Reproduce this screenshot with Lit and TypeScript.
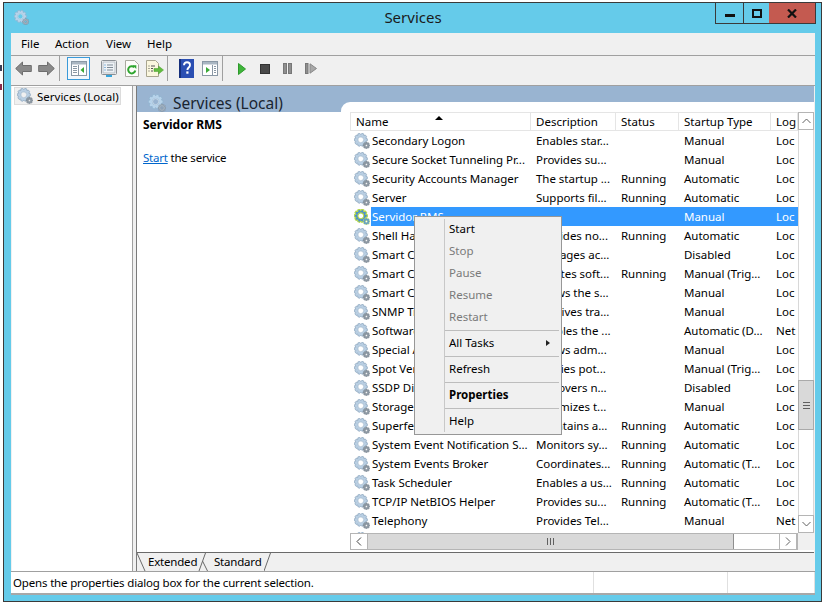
import { LitElement, html, css, svg } from "lit";
import { customElement } from "lit/decorators.js";

function gearPath(cx: number, cy: number, ro: number, ri: number, teeth: number, hole: number) {
  let d = "";
  const step = (Math.PI * 2) / teeth;
  for (let i = 0; i < teeth; i++) {
    const a = i * step;
    const pts: [number, number][] = [
      [ri, a - step * 0.5],
      [ro, a - step * 0.24],
      [ro, a + step * 0.24],
    ];
    for (const [r, t] of pts) {
      d += `${d ? "L" : "M"}${(cx + r * Math.cos(t)).toFixed(2)} ${(cy + r * Math.sin(t)).toFixed(2)}`;
    }
  }
  d += "Z";
  d += `M${cx + hole} ${cy}A${hole} ${hole} 0 1 0 ${cx - hole} ${cy}A${hole} ${hole} 0 1 0 ${cx + hole} ${cy}Z`;
  return d;
}

const BIG = gearPath(6.8, 6.8, 6.6, 5.2, 10, 2.9);
const SMALL = gearPath(12.4, 12.4, 3.5, 2.6, 8, 1);

function gear(size = 16, selected = false, faint = false) {
  return svg`<svg class="gear" width=${size} height=${size} viewBox="0 0 16 16">
    ${selected
      ? svg`<path d=${BIG} fill="#4a8fd0" stroke="#b5d84a" stroke-width="1.1" fill-rule="evenodd"/>
            <path d=${SMALL} fill="#5a9ad0" stroke="#c3dc5c" stroke-width=".5" fill-rule="evenodd"/>`
      : svg`<path d=${BIG} fill=${faint ? "#b7d3ea" : "#b9cfe3"} stroke=${faint ? "#90b4d0" : "#8aa3bb"} stroke-width=".7" fill-rule="evenodd"/>
            <circle cx="6.8" cy="6.8" r="2.7" fill="none" stroke="#e6eef5" stroke-width=".5"/>
            <path d=${SMALL} fill=${faint ? "#9fb0c0" : "#8c98a3"} stroke="#6f7b86" stroke-width=".3" fill-rule="evenodd"/>`}
  </svg>`;
}

type Row = [string, string, string, string, string];
const ROWS: Row[] = [
  ["Secondary Logon", "Enables star...", "", "Manual", "Loc"],
  ["Secure Socket Tunneling Pr...", "Provides su...", "", "Manual", "Loc"],
  ["Security Accounts Manager", "The startup ...", "Running", "Automatic", "Loc"],
  ["Server", "Supports fil...", "Running", "Automatic", "Loc"],
  ["Servidor RMS", "", "", "Manual", "Loc"],
  ["Shell Hardware Detection", "Provides no...", "Running", "Automatic", "Loc"],
  ["Smart Card", "Manages ac...", "", "Disabled", "Loc"],
  ["Smart Card Device Enum...", "Creates soft...", "Running", "Manual (Trig...", "Loc"],
  ["Smart Card Removal Policy", "Allows the s...", "", "Manual", "Loc"],
  ["SNMP Trap", "Receives tra...", "", "Manual", "Loc"],
  ["Software Protection", "Enables the ...", "", "Automatic (D...", "Net"],
  ["Special Administration Co...", "Allows adm...", "", "Manual", "Loc"],
  ["Spot Verifier", "Verifies pot...", "", "Manual (Trig...", "Loc"],
  ["SSDP Discovery", "Discovers n...", "", "Disabled", "Loc"],
  ["Storage Tiers Management", "Optimizes t...", "", "Manual", "Loc"],
  ["Superfetch", "Maintains a...", "Running", "Automatic", "Loc"],
  ["System Event Notification S...", "Monitors sy...", "Running", "Automatic", "Loc"],
  ["System Events Broker", "Coordinates...", "Running", "Automatic (T...", "Loc"],
  ["Task Scheduler", "Enables a us...", "Running", "Automatic", "Loc"],
  ["TCP/IP NetBIOS Helper", "Provides su...", "Running", "Automatic (T...", "Loc"],
  ["Telephony", "Provides Tel...", "", "Manual", "Net"],
  ["", "", "", "", ""],
];

const I = {
  back: svg`<svg width="17" height="15" viewBox="0 0 17 15"><path d="M.7 7.5 7.5 1v3.5h8.8v6H7.5V14z" fill="#8a8a8a" stroke="#6e6e6e"/></svg>`,
  fwd: svg`<svg width="17" height="15" viewBox="0 0 17 15"><path d="M16.3 7.5 9.5 1v3.5H.7v6h8.8V14z" fill="#8a8a8a" stroke="#6e6e6e"/></svg>`,
  tree: svg`<svg width="16" height="15" viewBox="0 0 16 15"><rect x=".5" y=".5" width="15" height="14" fill="#fff" stroke="#8a98a5"/><rect x="1" y="1" width="14" height="2.5" fill="#a9b6c2"/><path d="M2 5.5h4M2 7.5h4M2 9.5h4M2 11.5h4" stroke="#8a98a5"/><path d="M7.5 4v10" stroke="#8a98a5"/><path d="M13 6v6L9.5 9z" fill="#3aa935"/></svg>`,
  props: svg`<svg width="16" height="17" viewBox="0 0 16 17"><rect x=".5" y=".5" width="15" height="14" rx="1" fill="#fff" stroke="#8a8f95"/><rect x="2" y="2" width="12" height="11" fill="#eef2f6" stroke="#b5bcc3"/><path d="M6 5h6M6 7.5h6M6 10h6" stroke="#7e8a96"/><path d="M3.5 5h1M3.5 7.5h1M3.5 10h1" stroke="#2c7fc4"/><rect x="5" y="15" width="6" height="2" fill="#35a6dd"/></svg>`,
  refresh: svg`<svg width="14" height="17" viewBox="0 0 14 17"><path d="M.5.5h9l4 4v12H.5z" fill="#fdfdfa" stroke="#a9a99f"/><path d="M10.3 10.5a3.6 3.6 0 1 1-1-3.3" fill="none" stroke="#2fa52f" stroke-width="2"/><path d="M7.5 5.2h3.8V9z" fill="#2fa52f"/></svg>`,
  exp: svg`<svg width="18" height="17" viewBox="0 0 18 17"><path d="M.5.5h9l3 3v13H.5z" fill="#fbf7de" stroke="#a9a58f"/><path d="M2.5 6h1M5 6h4M2.5 8.5h1M5 8.5h2M2.5 11h1M5 11h2" stroke="#555"/><path d="M8 8.5h4.5V6l5 4-5 4v-2.5H8z" fill="#62bd3f" stroke="#4a9a2d" stroke-width=".5"/></svg>`,
  help: svg`<svg width="15" height="19" viewBox="0 0 15 19"><rect width="15" height="19" fill="#2b4fb2"/><rect x="0" y="0" width="2" height="19" fill="#162f7c"/><path d="M5 6.2c0-2 1.300-3 3-3s3 1 3 2.800c0 2.600-2.600 2.400-2.600 5" fill="none" stroke="#fff" stroke-width="1.900"/><rect x="7.300" y="12.400" width="2.200" height="2.300" fill="#fff"/></svg>`,
  win: svg`<svg width="16" height="15" viewBox="0 0 16 15"><rect x=".5" y=".5" width="15" height="14" fill="#fff" stroke="#8a98a5"/><rect x="1" y="1" width="14" height="2.500" fill="#a9b6c2"/><path d="M10.500 4v10" stroke="#8a98a5"/><path d="M12 5.500h2M12 7.500h2M12 9.500h2M12 11.500h2" stroke="#8a98a5"/><path d="M4 6v6l4-3z" fill="#3aa935"/></svg>`,
  play: svg`<svg width="8" height="12" viewBox="0 0 8 12"><path d="M.5.500 7.500 6 .5 11.500z" fill="#3fb53a" stroke="#2e9a2c"/></svg>`,
  stop: svg`<svg width="10" height="10" viewBox="0 0 10 10"><rect x=".5" y=".5" width="9" height="9" fill="#4a4a4a" stroke="#333"/></svg>`,
  pause: svg`<svg width="9" height="11" viewBox="0 0 9 11"><rect x=".5" y=".5" width="3" height="10" fill="#8f8f8f" stroke="#777"/><rect x="5.500" y=".5" width="3" height="10" fill="#8f8f8f" stroke="#777"/></svg>`,
  resume: svg`<svg width="12" height="11" viewBox="0 0 12 11"><rect x=".5" y=".5" width="2.500" height="10" fill="#8f8f8f" stroke="#777"/><path d="M5 .8 11.500 5.500 5 10.200z" fill="#a8a8a8" stroke="#888"/></svg>`,
};

@customElement("app-root")
export class AppRoot extends LitElement {
  static styles = css`
    :host {
      display: block;
      position: relative;
      width: 825px;
      height: 608px;
      background: #fff;
      overflow: hidden;
      font-family: "Noto Sans", "Open Sans", sans-serif;
      font-size: 11.5px;
      color: #000;
    }
    svg { display: block; flex: none; }
    .behind-a, .behind-b { position: absolute; left: 0; width: 2px; height: 6px; }
    .behind-a { top: 65px; background: #3a4058; }
    .behind-b { top: 84px; background: #8a2a4a; }
    .win {
      box-sizing: border-box;
      position: absolute;
      left: 3px;
      top: 2px;
      width: 819px;
      height: 600px;
      border: 1px solid #3a3a3a;
      background: #65cbea;
      padding: 0 6px 6px 7px;
      display: flex;
      flex-direction: column;
    }
    .title {
      height: 30px;
      flex: none;
      display: grid;
      grid-template-columns: 1fr auto 1fr;
      align-items: start;
    }
    .t-icon { margin: 7px 0 0 3px; }
    .t-text { font-size: 15px; line-height: 28px; color: #1a1a1a; }
    .controls {
      justify-self: end;
      margin-right: -1px;
      height: 21px;
      display: flex;
      box-sizing: border-box;
      border: 1px solid #3a3a3a;
      border-top: none;
    }
    .ctl { display: flex; align-items: center; justify-content: center; box-sizing: border-box; height: 20px; }
    .ctl.min { width: 28px; border-right: 1px solid #3a3a3a; }
    .ctl.max { width: 25px; }
    .ctl.close { width: 46px; background: #c45a50; }
    .client { flex: 1; min-height: 0; background: #f0f0f0; display: flex; flex-direction: column; }
    .menu {
      height: 23px;
      flex: none;
      box-sizing: border-box;
      display: flex;
      align-items: center;
      padding: 0 0 2px 2px;
      border-bottom: 1px solid #a0a0a0;
    }
    .menu span { padding: 0 8px; }
    .menu span:nth-child(1) { width: 18px; }
    .menu span:nth-child(2) { width: 35px; }
    .menu span:nth-child(3) { width: 25px; }
    .toolbar {
      height: 29px;
      flex: none;
      display: flex;
      align-items: center;
      padding-left: 1px;
      box-sizing: border-box;
      padding-bottom: 4px;
    }
    .tb {
      width: 23px;
      height: 23px;
      flex: none;
      display: flex;
      align-items: center;
      justify-content: center;
      box-sizing: border-box;
    }
    .tb.on { background: #f3f8fc; border: 1px solid #3a9ad9; margin-right: 7px; }
    .sep { width: 1px; height: 25px; background: #a0a0a0; flex: none; margin: 0 7px 0 1px; }
    .main {
      flex: 1;
      min-height: 0;
      display: flex;
      border-top: 1px solid #a0a0a0;
    }
    .tree {
      width: 121px;
      flex: none;
      margin-left: 1px;
      background: #fff;
      padding: 1px 0 0 2px;
      box-sizing: border-box;
      border-right: 1px solid #a0a0a0;
    }
    .tree-item {
      width: 107px;
      height: 18px;
      box-sizing: border-box;
      background: #f0f0f0;
      border: 1px solid #dcdcdc;
      display: flex;
      align-items: center;
      gap: 4px;
      padding-left: 2px;
      white-space: nowrap;
    }
    .split { width: 3px; flex: none; background: #f0f0f0; }
    .right {
      flex: 1;
      min-width: 0;
      display: flex;
      flex-direction: column;
      border-left: 1px solid #7a7a7a;
      margin-right: 1px;
    }
    .pane { flex: 1; min-height: 0; display: flex; background: #99b4d1; }
    .col-left { width: 204px; flex: none; display: flex; flex-direction: column; }
    .head {
      height: 26px;
      flex: none;
      display: flex;
      align-items: center;
      gap: 7px;
      padding: 8px 0 0 11px;
      font-size: 15.5px;
      letter-spacing: -0.02px;
      color: #1a2430;
      box-sizing: border-box;
    }
    .desc { flex: 1; background: #fff; padding: 4px 0 0 6px; letter-spacing: -0.22px; }
    .desc b { display: block; font-weight: 700; font-size: 12px; height: 34px; line-height: 18px; letter-spacing: 0; }
    .desc a { color: #0066cc; text-decoration: underline; }
    .col-right {
      flex: 1;
      min-width: 0;
      margin-top: 16px;
      background: #fff;
      border-top-left-radius: 9px;
      padding: 10px 0 2px 9px;
      display: grid;
      grid-template-columns: 1fr 16px;
      grid-template-rows: 1fr 17px;
    }
    .list { min-width: 0; min-height: 0; overflow: hidden; }
    .cols, .row {
      display: grid;
      grid-template-columns: 180px 85px 63px 92px 27px;
      white-space: nowrap;
    }
    .cols { height: 19px; box-sizing: border-box; border: 1px solid #e5e5e5; border-right: none; position: relative; }
    .cols div { padding-left: 5px; line-height: 18px; border-right: 1px solid #e5e5e5; overflow: hidden; }
    .cols div:last-child { border-right: none; }
    .arrow { position: absolute; left: 84px; top: 3px; width: 0; height: 0; border: 4px solid transparent; border-top: none; border-bottom: 4px solid #000; }
    .row { height: 19px; line-height: 19px; letter-spacing: -0.03px; }
    .row > div { overflow: hidden; padding-left: 6px; }
    .row > .nm { display: flex; align-items: center; padding-left: 0; }
    .nm svg { margin: 0 2px 0 4px; }
    .nm span { height: 19px; flex: 1; }
    .row.sel { color: #fff; background: linear-gradient(90deg, transparent 21px, #3399ff 21px); }
    .vbar { display: flex; flex-direction: column; }
    .sbtn { box-sizing: border-box; border: 1px solid #b5b5b5; background: #fff; display: flex; align-items: center; justify-content: center; flex: none; }
    .vbar .sbtn { height: 18px; }
    .vtrack { flex: 1; background: #fff; display: flex; flex-direction: column; border-left: 1px solid #d8d8d8; border-right: 1px solid #d8d8d8; box-sizing: border-box; }
    .vgap { height: 250px; flex: none; }
    .vthumb { height: 50px; flex: none; background: #d9d9d9; border: 1px solid #aaa; box-sizing: border-box; margin: 0 -1px; display: flex; align-items: center; justify-content: center; }
    .vrest { flex: 1; }
    .hbar { display: flex; border: 1px solid #b5b5b5; border-left: none; box-sizing: border-box; }
    .hbar .sbtn { width: 18px; border-top: none; border-bottom: none; }
    .hbar .sbtn.first { border-left: 1px solid #b5b5b5; }
    .hthumb { width: 366px; flex: none; background: #d9d9d9; border-right: 1px solid #8f8f8f; box-sizing: border-box; display: flex; align-items: center; justify-content: center; }
    .htrack { flex: 1; background: #fff; }
    .corner { background: #f0f0f0; }
    .tabs {
      height: 19px;
      flex: none;
      border-top: 1px solid #6a6a6a;
      box-sizing: border-box;
      display: flex;
      align-items: stretch;
      background: #f0f0f0;
      line-height: 17px;
      letter-spacing: -0.2px;
    }
    .tabs span { display: block; }
    .tabs .t1 { width: 48px; margin: 0 2px 0 2px; }
    .tabs .t2 { width: 47px; margin: 0 3px 0 5px; }
    .status {
      height: 24px;
      flex: none;
      box-sizing: border-box;
      border-top: 1px solid #a0a0a0;
      border-bottom: 2px solid #a8a8a8;
      background: #fff;
      display: flex;
      line-height: 22px;
    }
    .status .s1 { width: 583px; padding-left: 2px; box-sizing: border-box; border-right: 1px solid #e0e0e0; letter-spacing: -0.17px; white-space: nowrap; }
    .status .s2 { width: 133px; border-right: 1px solid #e0e0e0; }
    .status .s3 { flex: 1; border-right: 1px solid #e0e0e0; }
    .ctx {
      position: absolute;
      left: 414px;
      top: 216px;
      width: 148px;
      height: 219px;
      box-sizing: border-box;
      border: 1px solid #979797;
      background: #f0f0f0;
      padding: 1px 0 0 0;
    }
    .ctx::before {
      content: "";
      position: absolute;
      left: 29px;
      top: 2px;
      bottom: 2px;
      width: 1px;
      background: #c8c8c8;
    }
    .mi { height: 22px; line-height: 22px; padding-left: 34px; position: relative; }
    .mi.off { color: #7a7a7a; }
    .mi.bold { font-weight: 700; }
    .mi i {
      position: absolute;
      right: 11px;
      top: 8px;
      width: 0;
      height: 0;
      border: 3.500px solid transparent;
      border-right: none;
      border-left: 4px solid #222;
    }
    .ms { height: 4px; margin-left: 30px; margin-right: 2px; display: flex; align-items: center; }
    .ms::after { content: ""; flex: 1; height: 1px; background: #bdbdbd; }
  `;

  private tbButton(icon: unknown, on = false) {
    return html`<div class="tb ${on ? "on" : ""}">${icon}</div>`;
  }

  render() {
    return html`
      <div class="behind-a"></div>
      <div class="behind-b"></div>
      <div class="win">
        <div class="title">
          <div class="t-icon">${gear(15, false, true)}</div>
          <div class="t-text">Services</div>
          <div class="controls">
            <div class="ctl min">
              <svg width="10" height="10" viewBox="0 0 10 10"><rect y="6" width="10" height="3" fill="#111"/></svg>
            </div>
            <div class="ctl max">
              <svg width="10" height="9" viewBox="0 0 10 9"><rect x="1" y="1" width="8" height="7" fill="none" stroke="#111" stroke-width="2"/></svg>
            </div>
            <div class="ctl close">
              <svg width="10" height="9" viewBox="0 0 10 9"><path d="M1 .5 9 8.500M9 .5 1 8.500" stroke="#111" stroke-width="2.200"/></svg>
            </div>
          </div>
        </div>
        <div class="client">
          <div class="menu"><span>File</span><span>Action</span><span>View</span><span>Help</span></div>
          <div class="toolbar">
            ${this.tbButton(I.back)}${this.tbButton(I.fwd)}
            <div class="sep"></div>
            ${this.tbButton(I.tree, true)}
            ${this.tbButton(I.props)}${this.tbButton(I.refresh)}${this.tbButton(I.exp)}
            <div class="sep"></div>
            ${this.tbButton(I.help)}${this.tbButton(I.win)}
            <div class="sep"></div>
            ${this.tbButton(I.play)}${this.tbButton(I.stop)}${this.tbButton(I.pause)}${this.tbButton(I.resume)}
          </div>
          <div class="main">
            <div class="tree">
              <div class="tree-item">${gear(16)}<span>Services (Local)</span></div>
            </div>
            <div class="split"></div>
            <div class="right">
              <div class="pane">
                <div class="col-left">
                  <div class="head">${gear(18, false, true)}<span>Services (Local)</span></div>
                  <div class="desc">
                    <b>Servidor RMS</b>
                    <div><a>Start</a> the service</div>
                  </div>
                </div>
                <div class="col-right">
                  <div class="list">
                    <div class="cols">
                      <div>Name</div><div>Description</div><div>Status</div><div>Startup Type</div><div>Log</div>
                      <span class="arrow"></span>
                    </div>
                    ${ROWS.map(
                      (r, i) => html`<div class="row ${i === 4 ? "sel" : ""}">
                        <div class="nm">${gear(16, i === 4)}<span>${r[0]}</span></div>
                        <div>${r[1]}</div><div>${r[2]}</div><div>${r[3]}</div><div>${r[4]}</div>
                      </div>`
                    )}
                  </div>
                  <div class="vbar">
                    <div class="sbtn"><svg width="9" height="6" viewBox="0 0 9 6"><path d="M.5 5 4.500 1l4 4" fill="none" stroke="#606060"/></svg></div>
                    <div class="vtrack">
                      <div class="vgap"></div>
                      <div class="vthumb"><svg width="7" height="7" viewBox="0 0 7 7"><path d="M0 .5h7M0 3.500h7M0 6.500h7" stroke="#606060"/></svg></div>
                      <div class="vrest"></div>
                    </div>
                    <div class="sbtn"><svg width="9" height="6" viewBox="0 0 9 6"><path d="M.5 1l4 4 4-4" fill="none" stroke="#606060"/></svg></div>
                  </div>
                  <div class="hbar">
                    <div class="sbtn first"><svg width="6" height="9" viewBox="0 0 6 9"><path d="M5 .5 1 4.500l4 4" fill="none" stroke="#404040"/></svg></div>
                    <div class="hthumb"><svg width="7" height="7" viewBox="0 0 7 7"><path d="M.5 0v7M3.500 0v7M6.500 0v7" stroke="#606060"/></svg></div>
                    <div class="htrack"></div>
                    <div class="sbtn"><svg width="6" height="9" viewBox="0 0 6 9"><path d="M1 .5l4 4-4 4" fill="none" stroke="#606060"/></svg></div>
                  </div>
                  <div class="corner"></div>
                </div>
              </div>
              <div class="tabs">
                <svg width="9" height="18" viewBox="0 0 9 18"><path d="M0 0 8 18" stroke="#6a6a6a"/></svg>
                <span class="t1">Extended</span>
                <svg width="11" height="18" viewBox="0 0 11 18"><path d="M7.500 0 1 18M4.500 8 9.500 18" fill="none" stroke="#6a6a6a"/></svg>
                <span class="t2">Standard</span>
                <svg width="7" height="18" viewBox="0 0 7 18"><path d="M6.500 0 0 18" stroke="#6a6a6a"/></svg>
              </div>
            </div>
          </div>
          <div class="status">
            <div class="s1">Opens the properties dialog box for the current selection.</div>
            <div class="s2"></div>
            <div class="s3"></div>
          </div>
        </div>
      </div>
      <div class="ctx">
        <div class="mi">Start</div>
        <div class="mi off">Stop</div>
        <div class="mi off">Pause</div>
        <div class="mi off">Resume</div>
        <div class="mi off">Restart</div>
        <div class="ms"></div>
        <div class="mi">All Tasks<i></i></div>
        <div class="ms"></div>
        <div class="mi">Refresh</div>
        <div class="ms"></div>
        <div class="mi bold">Properties</div>
        <div class="ms"></div>
        <div class="mi">Help</div>
      </div>
    `;
  }
}
